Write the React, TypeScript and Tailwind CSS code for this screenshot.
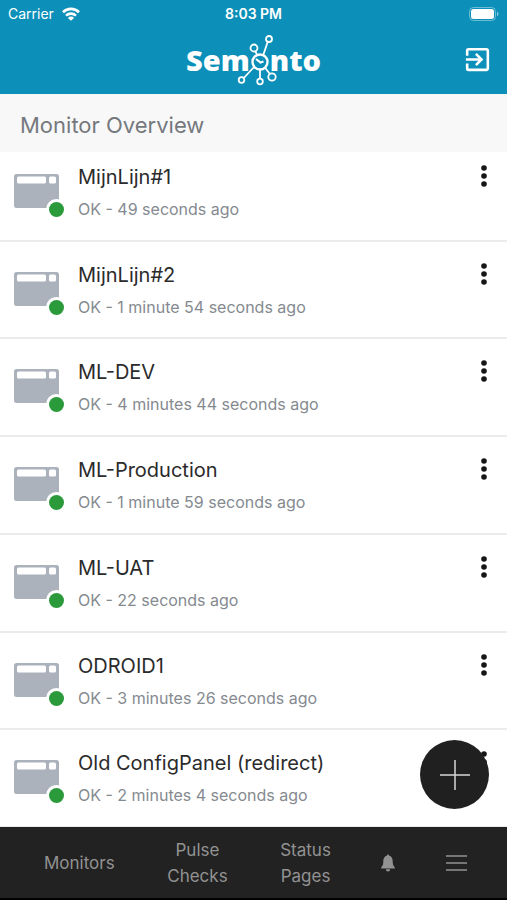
import { MdExitToApp } from "react-icons/md";
import { IoIosNotifications } from "react-icons/io";

type Monitor = { name: string; status: string };

const monitors: Monitor[] = [
    { name: "MijnLijn#1", status: "OK - 49 seconds ago" },
    { name: "MijnLijn#2", status: "OK - 1 minute 54 seconds ago" },
    { name: "ML-DEV", status: "OK - 4 minutes 44 seconds ago" },
    { name: "ML-Production", status: "OK - 1 minute 59 seconds ago" },
    { name: "ML-UAT", status: "OK - 22 seconds ago" },
    { name: "ODROID1", status: "OK - 3 minutes 26 seconds ago" },
    { name: "Old ConfigPanel (redirect)", status: "OK - 2 minutes 4 seconds ago" },
];

function StatusBar() {
    return (
        <div className="grid grid-cols-3 items-center px-2 h-7 text-sm">
            <div className="flex items-center gap-2">
                <span>Carrier</span>
                <svg width="18" height="14" viewBox="0 0 18 14" fill="none" stroke="currentColor" strokeWidth="2.6">
                    <path d="M1 5.2a11.4 11.4 0 0 1 16 0" />
                    <path d="M4 8.6a7.2 7.2 0 0 1 10 0" />
                    <path d="M9 13.8 5.9 10.9a4.4 4.4 0 0 1 6.2 0z" fill="currentColor" stroke="none" />
                </svg>
            </div>
            <span className="text-center font-semibold">8:03 PM</span>
            <svg className="justify-self-end" width="30" height="14" viewBox="0 0 30 14">
                <rect x="0.5" y="0.5" width="26" height="13" rx="4" fill="none" stroke="#fff" strokeOpacity="0.4" />
                <rect x="2" y="2" width="23" height="10" rx="2.5" fill="#fff" />
                <path d="M28 4.8v4.4c1-.4 1.5-1.2 1.5-2.2s-.5-1.8-1.5-2.2z" fill="#fff" fillOpacity="0.5" />
            </svg>
        </div>
    );
}

function Logo() {
    return (
        <div className="flex items-center justify-center h-16 font-['Open_Sans',sans-serif] font-extrabold text-[29px]">
            <span>Sem</span>
            <span className="relative w-5 h-5">
                <svg className="absolute -left-4 -top-4" width="52" height="52" viewBox="0 0 52 52" fill="none" stroke="currentColor" strokeWidth="1.8">
                    <circle cx="26" cy="28" r="7.5" strokeWidth="2.4" />
                    <circle cx="20" cy="14" r="3.5" />
                    <circle cx="35" cy="5" r="3" />
                    <circle cx="7.5" cy="46" r="2.8" />
                    <circle cx="26" cy="47.5" r="2.8" />
                    <circle cx="38" cy="43" r="3.7" />
                    <path d="M21.4 17.2 23 21M33.7 7.8 29.3 21M20 33 9.8 44M26 35.5v9M31 33.5l4.5 6" />
                    <path d="m22 25 4.5 3.5 3-1" strokeWidth="2.2" />
                </svg>
            </span>
            <span>nto</span>
        </div>
    );
}

function WindowIcon() {
    return (
        <svg width="52" height="46" viewBox="0 0 52 46">
            <path
                fillRule="evenodd"
                fill="#abb2bc"
                d="M2.5 0h40A2.5 2.5 0 0 1 45 2.5v29a2.5 2.5 0 0 1-2.5 2.5h-40A2.5 2.5 0 0 1 0 31.5v-29A2.5 2.5 0 0 1 2.5 0zM4.5 2.5a1.5 1.5 0 0 0-1.5 1.5v4a1.5 1.5 0 0 0 1.5 1.5h26a1.5 1.5 0 0 0 1.5-1.5v-4a1.5 1.5 0 0 0-1.5-1.5zM36.5 2.5a1.5 1.5 0 0 0-1.5 1.5v4a1.5 1.5 0 0 0 1.5 1.5h4a1.5 1.5 0 0 0 1.5-1.5v-4a1.5 1.5 0 0 0-1.5-1.5z"
            />
            <circle cx="42.5" cy="35.5" r="10.5" fill="#fff" />
            <circle cx="42.5" cy="35.5" r="7.5" fill="#2b9a3b" />
        </svg>
    );
}

function MonitorRow({ name, status }: Monitor) {
    return (
        <li className="flex flex-1 items-start px-3.5 pt-4 pb-3 border-b-2 border-[#ebebec]">
            <div className="w-16 shrink-0 pt-3.5">
                <WindowIcon />
            </div>
            <div className="flex-1 min-w-0 pt-px">
                <h2 className="text-xl leading-8 text-[#2b2b2b]">{name}</h2>
                <p className="text-base leading-8 text-[#858a90]">{status}</p>
            </div>
            <button aria-label={`Options for ${name}`} className="pt-1 pr-1.5">
                <svg width="6" height="24" viewBox="0 0 6 24" fill="#161616">
                    <circle cx="3" cy="4" r="2.8" />
                    <circle cx="3" cy="12" r="2.8" />
                    <circle cx="3" cy="20" r="2.8" />
                </svg>
            </button>
        </li>
    );
}

export default function App() {
    return (
        <div className="flex flex-col min-h-screen bg-white font-['Inter',sans-serif]">
            <header className="relative bg-[#0c8fb8] text-white pb-0.5">
                <StatusBar />
                <Logo />
                <button aria-label="Log out" className="absolute right-3.5 top-11">
                    <MdExitToApp size={31} />
                </button>
            </header>

            <h1 className="relative z-10 bg-[#f8f8f9] px-5 pt-3.5 pb-2.5 text-[22px] leading-[34px] text-[#75797d]">
                Monitor Overview
            </h1>

            {/* list slides under the title and the tab bar */}
            <main className="relative flex flex-1 flex-col -mt-2 -mb-px">
                <ul className="flex flex-1 flex-col">
                    {monitors.map((m) => (
                        <MonitorRow key={m.name} {...m} />
                    ))}
                </ul>
                <button
                    aria-label="Add monitor"
                    className="absolute right-[18px] bottom-[19px] flex items-center justify-center w-[69px] h-[69px] rounded-full bg-[#202020]"
                >
                    <svg width="30" height="30" viewBox="0 0 30 30" stroke="#d6d6d6" strokeWidth="1.5">
                        <path d="M15 0v30M0 15h30" />
                    </svg>
                </button>
            </main>

            <nav className="relative z-10 flex items-center justify-between h-[73px] pl-11 pr-10 bg-[#222] border-b-2 border-black text-center text-[17px] leading-[26px] text-[#929292]">
                <a href="#monitors">Monitors</a>
                <a href="#pulse" className="w-min">Pulse Checks</a>
                <a href="#status" className="w-min">Status Pages</a>
                <a href="#notifications" aria-label="Notifications" className="-mx-1.5">
                    <IoIosNotifications size={22} />
                </a>
                <button aria-label="Menu">
                    <svg width="21" height="16" viewBox="0 0 21 16" stroke="currentColor" strokeWidth="1.6">
                        <path d="M0 1h21M0 8h21M0 15h21" />
                    </svg>
                </button>
            </nav>
        </div>
    );
}
